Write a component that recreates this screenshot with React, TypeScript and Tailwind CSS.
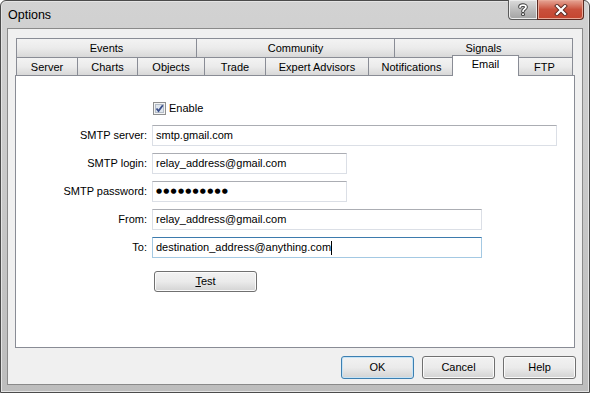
import React from "react";

function Tab({ label, w, first, selected }: { label: string; w: string; first?: boolean; selected?: boolean }) {
  if (selected) {
    return (
      <div
        className={`relative z-10 ${w} -ml-[3px] -mr-[2px] self-end -mb-px h-[21px] border border-b-0 border-[#898c95] bg-white flex items-start justify-center pt-[2px] leading-[13px]`}
      >
        {label}
      </div>
    );
  }
  return (
    <div
      className={`${w} ${first ? "" : "-ml-px"} h-full border border-b-0 border-[#898c95] bg-gradient-to-b from-[#f3f3f3] via-[#ebebeb] to-[#d8d8d8] flex items-center justify-center leading-[13px] pt-px`}
    >
      {label}
    </div>
  );
}

function Btn({ children, w, def }: { children: React.ReactNode; w: string; def?: boolean }) {
  return (
    <div
      className={`${w} h-full rounded-[3px] border ${
        def ? "border-[#3c7fb1] shadow-[inset_0_0_0_1px_#c5e3f6]" : "border-[#707070] shadow-[inset_0_0_0_1px_#fbfbfb]"
      } bg-gradient-to-b from-[#f2f2f2] via-[#ebebeb] to-[#d3d3d3] flex items-center justify-center leading-[13px]`}
    >
      {children}
    </div>
  );
}

export default function App() {
  return (
    <div className="w-[590px] h-[393px] bg-white font-['Liberation_Sans',Arial,sans-serif] text-[11px] text-black overflow-hidden">
      <div className="w-full h-full flex flex-col rounded-t-[6px] border border-[#4b4b4b] bg-gradient-to-b from-[#d2d2d2] via-[#c8c8c8] to-[#bdbdbd] shadow-[inset_0_0_0_1px_#e4e4e4]">
        {/* Title bar */}
        <div className="h-[27px] shrink-0 flex items-start">
          <div className="pl-[7px] pt-[7px] text-[12.5px] leading-[15px] text-black">Options</div>
          <div className="ml-auto mr-[5px] -mt-px flex h-[20px]">
            <div className="w-[29px] h-full rounded-bl-[4px] border border-t-0 border-r-0 border-[#5a5a5a] bg-gradient-to-b from-[#dcdcdc] via-[#bdbdbd] to-[#a3a3a3] shadow-[inset_0_0_0_1px_#ececec] flex items-center justify-center">
              <svg width="10" height="13" viewBox="0 0 10 13">
                <path d="M2 4 C2 1.5 8 1.5 8 4 C8 6 5 6 5 8.2" fill="none" stroke="#3a3a3a" strokeWidth="3.6" strokeLinecap="round" />
                <circle cx="5" cy="11.2" r="1.9" fill="#3a3a3a" />
                <path d="M2 4 C2 1.5 8 1.5 8 4 C8 6 5 6 5 8.2" fill="none" stroke="#ffffff" strokeWidth="1.8" strokeLinecap="round" />
                <circle cx="5" cy="11.2" r="1" fill="#ffffff" />
              </svg>
            </div>
            <div className="w-[47px] h-full rounded-br-[4px] border border-t-0 border-[#5a2a22] bg-gradient-to-b from-[#e5a596] via-[#c9503c] to-[#c4452f] shadow-[inset_0_0_0_1px_#e9a998] flex items-center justify-center">
              <svg width="14" height="12" viewBox="0 0 14 12">
                <path d="M3 2 L11 10 M11 2 L3 10" stroke="#5a2a22" strokeWidth="4" strokeLinecap="square" />
                <path d="M3 2 L11 10 M11 2 L3 10" stroke="#ffffff" strokeWidth="2.2" strokeLinecap="square" />
              </svg>
            </div>
          </div>
        </div>

        {/* Client area */}
        <div className="flex-1 mx-[6px] mb-[7px] border border-[#8a8a8a] bg-[#f0f0f0] flex flex-col px-[7px] pt-[9px]">
          {/* Tabs */}
          <div className="ml-px w-[557px] flex flex-col">
            <div className="flex h-[19px]">
              <Tab label="Events" w="w-[181px]" first />
              <Tab label="Community" w="w-[199px]" />
              <Tab label="Signals" w="w-[179px]" />
            </div>
            <div className="flex h-[18px] items-end">
              <Tab label="Server" w="w-[62px]" first />
              <Tab label="Charts" w="w-[61px]" />
              <Tab label="Objects" w="w-[68px]" />
              <Tab label="Trade" w="w-[62px]" />
              <Tab label="Expert Advisors" w="w-[104px]" />
              <Tab label="Notifications" w="w-[87px]" />
              <Tab label="Email" w="w-[67px]" selected />
              <Tab label="FTP" w="w-[57px]" />
            </div>
          </div>

          {/* Panel */}
          <div className="h-[273px] border border-[#898c95] bg-white flex flex-col">
            <div className="grid grid-cols-[131px_1fr] gap-x-[5px] pt-[26px]">
              {/* Enable */}
              <div />
              <div className="h-[13px] flex items-center gap-[3px] ml-px">
                <svg width="13" height="13" viewBox="0 0 13 13">
                  <rect x="0.5" y="0.5" width="12" height="12" fill="#f4f4f4" stroke="#8e8f8f" />
                  <rect x="2.5" y="2.5" width="8" height="8" fill="#dfe6ee" stroke="#b4bcc6" />
                  <path d="M3.5 6.5 L5.5 9 L9.8 3.3" fill="none" stroke="#3b4f8a" strokeWidth="1.8" />
                </svg>
                <span className="leading-[13px]">Enable</span>
              </div>

              {/* SMTP server */}
              <div className="mt-[10px] h-[21px] flex items-center justify-end">SMTP server:</div>
              <div className="mt-[10px] h-[21px] w-[405px] border border-[#dbdfe6] border-t-[#abadb3] flex items-center pl-[3px]">smtp.gmail.com</div>

              <div className="mt-[7px] h-[21px] flex items-center justify-end">SMTP login:</div>
              <div className="mt-[7px] h-[21px] w-[195px] border border-[#dbdfe6] border-t-[#abadb3] flex items-center pl-[3px]">relay_address@gmail.com</div>

              <div className="mt-[7px] h-[21px] flex items-center justify-end">SMTP password:</div>
              <div className="mt-[7px] h-[21px] w-[195px] border border-[#dbdfe6] border-t-[#abadb3] flex items-center pl-[3px]">
                <span className="font-['DejaVu_Sans',sans-serif] text-[7px] tracking-[1.2px] leading-none">●●●●●●●●●●</span>
              </div>

              <div className="mt-[7px] h-[21px] flex items-center justify-end">From:</div>
              <div className="mt-[7px] h-[21px] w-[330px] border border-[#dbdfe6] border-t-[#abadb3] flex items-center pl-[3px]">relay_address@gmail.com</div>

              <div className="mt-[7px] h-[21px] flex items-center justify-end">To:</div>
              <div className="mt-[7px] h-[21px] w-[330px] border border-[#a4c9e3] border-t-[#3d7bad] flex items-center pl-[3px]">
                destination_address@anything.com
                <span className="inline-block w-px h-[14px] bg-black" />
              </div>

              <div />
              <div className="mt-[13px] ml-[2px] h-[21px] flex">
                <Btn w="w-[103px]">
                  <span>
                    <span className="underline">T</span>est
                  </span>
                </Btn>
              </div>
            </div>
          </div>

          {/* Bottom buttons */}
          <div className="mt-[8px] h-[23px] flex justify-end gap-[8px] -mr-px">
            <Btn w="w-[73px]" def>OK</Btn>
            <Btn w="w-[73px]">Cancel</Btn>
            <Btn w="w-[73px]">Help</Btn>
          </div>
        </div>
      </div>
    </div>
  );
}
